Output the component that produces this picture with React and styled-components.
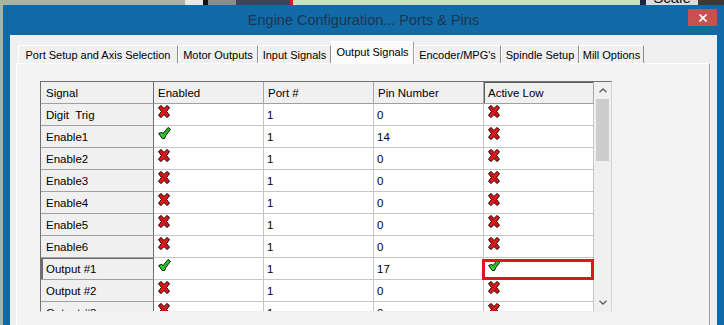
import React from "react";
import styled, { createGlobalStyle } from "styled-components";

const Global = createGlobalStyle`
  html, body { margin: 0; padding: 0; background: #a7b3a3; }
  body { font-family: "Liberation Sans", Arial, sans-serif; }
  * { box-sizing: border-box; }
`;

const Screen = styled.div`
  width: 724px;
  height: 325px;
  overflow: hidden;
  display: flex;
  flex-direction: column;
  background: #a7b3a3;
`;

const DesktopStrip = styled.div`
  display: flex;
  height: 5px;
  flex: none;
  overflow: hidden;
`;

const StripSeg = styled.div`
  width: ${(p) => p.$w}px;
  flex: none;
  background: ${(p) => p.$c};
  overflow: hidden;
  display: flex;
  justify-content: center;
`;

const ScaleText = styled.span`
  font: 15px/15px "Liberation Sans", Arial, sans-serif;
  color: #111;
  margin-top: -10px;
`;

const Body = styled.div`
  display: flex;
  flex: 1;
  min-height: 0;
`;

const DesktopEdge = styled.div`
  width: 3px;
  flex: none;
  background: #a7b3a3;
`;

const Window = styled.div`
  flex: 1;
  min-width: 0;
  display: flex;
  flex-direction: column;
  background: #116aa6;
  padding: 0 7px;
`;

const TitleBar = styled.div`
  height: 30px;
  flex: none;
  display: grid;
  grid-template-columns: 1fr auto 1fr;
  align-items: center;
`;

const Title = styled.div`
  grid-column: 2;
  font-size: 14.5px;
  color: #1d3552;
  white-space: nowrap;
`;

const CloseButton = styled.div`
  grid-column: 3;
  justify-self: end;
  align-self: start;
  margin-top: 4px;
  width: 29px;
  height: 17px;
  background: #c75050;
  display: flex;
  align-items: center;
  justify-content: center;
`;

const Client = styled.div`
  flex: 1;
  min-height: 0;
  background: #f0f0f0;
  padding: 6px 7px 0 6px;
  display: flex;
  flex-direction: column;
`;

const TabRow = styled.div`
  display: flex;
  align-items: flex-end;
  height: 22px;
  flex: none;
  padding-left: 2px;
  position: relative;
  z-index: 1;
`;

const Tab = styled.div`
  width: ${(p) => p.$w}px;
  height: ${(p) => (p.$active ? 23 : 18)}px;
  margin-bottom: ${(p) => (p.$active ? -1 : 0)}px;
  flex: none;
  background: ${(p) => (p.$active ? "#fbfbfb" : "#f0f0f0")};
  border-top: 1px solid #ffffff;
  border-left: 1px solid #ffffff;
  border-right: 1px solid ${(p) => (p.$active ? "#a0a0a0" : "#8c8c8c")};
  font-size: 11px;
  color: #000;
  white-space: nowrap;
  display: flex;
  align-items: center;
  justify-content: center;
  padding-bottom: ${(p) => (p.$active ? 3 : 0)}px;
`;

const Panel = styled.div`
  flex: 1;
  min-height: 0;
  background: #f3f3f3;
  border-top: 1px solid #ffffff;
  border-left: 1px solid #ffffff;
  border-right: 1px solid #a0a0a0;
  padding: 17px 0 0 23px;
`;

const Grid = styled.div`
  width: 572px;
  height: 231px;
  display: flex;
  overflow: hidden;
  background: #f0f0f0;
  border-style: solid;
  border-width: 1px;
  border-color: #707070 #d4d4d4 #f0f0f0 #707070;
`;

const Table = styled.div`
  width: 553px;
  flex: none;
  display: grid;
  grid-template-columns: 113px repeat(4, 110px);
  grid-auto-rows: 22px;
  align-content: start;
  font-size: 11.5px;
  color: #000;
`;

const HeaderCell = styled.div`
  background: #f0f0f0;
  border-right: 1px solid ${(p) => (p.$first ? "#6d6d6d" : "#a8a8a8")};
  border-bottom: 1px solid #a0a0a0;
  padding-left: ${(p) => (p.$first ? 5 : 4)}px;
  display: flex;
  align-items: center;
  white-space: nowrap;
  box-shadow: ${(p) =>
    p.$selected ? "inset 0 1px 0 #5a5a5a, inset 1px 0 0 #5a5a5a" : "none"};
`;

const RowHeader = styled.div`
  background: #f0f0f0;
  border-right: 1px solid #6d6d6d;
  border-bottom: 1px solid #a0a0a0;
  padding-left: 5px;
  display: flex;
  align-items: center;
  white-space: pre;
  box-shadow: ${(p) =>
    p.$selected ? "inset 2px 0 0 #6d6d6d, inset 0 1px 0 #6d6d6d" : "none"};
`;

const Cell = styled.div`
  position: relative;
  background: #ffffff;
  border-right: 1px solid #c6c6c6;
  border-bottom: 1px solid #c6c6c6;
  display: flex;
  align-items: ${(p) => (p.$icon ? "flex-start" : "center")};
  padding: ${(p) => (p.$icon ? "1px 0 0 4px" : "0 0 0 3px")};

  &::after {
    content: "";
    display: ${(p) => (p.$focused ? "block" : "none")};
    position: absolute;
    left: -2px;
    top: 1px;
    right: -1px;
    bottom: -1px;
    border: 3px solid #e0141b;
  }
`;

const ScrollBar = styled.div`
  width: 17px;
  flex: none;
  background: #f0f0f0;
  display: flex;
  flex-direction: column;
  align-items: center;
`;

const ScrollArrow = styled.div`
  height: 17px;
  width: 17px;
  flex: none;
  display: flex;
  align-items: center;
  justify-content: center;
`;

const Thumb = styled.div`
  width: 13px;
  height: 62px;
  flex: none;
  background: #cdcdcd;
`;

const ScrollTrack = styled.div`
  flex: 1;
`;

const Cross = () => (
  <svg width="12" height="13" viewBox="0 0 12 13">
    <polygon
      points="0.5,2.6 3,0.5 6,3.4 9,0.5 11.5,2.6 8.6,6.5 11.5,10.4 9,12.5 6,9.6 3,12.5 0.5,10.4 3.4,6.5"
      fill="#e21a1c"
      stroke="#1a0000"
      strokeWidth="1"
      strokeLinejoin="round"
    />
    <polyline points="2.6,2 9.4,11" stroke="#a50c0c" strokeWidth="0.9" fill="none" />
  </svg>
);

const Check = () => (
  <svg width="13" height="12" viewBox="0 0 13 12">
    <polygon
      points="0.6,6.4 4,5.4 4.9,6.8 10,0.5 12.5,2.2 7.8,8.6 6.6,11.5 4.2,11.5"
      fill="#30d030"
      stroke="#0a1a0a"
      strokeWidth="1"
      strokeLinejoin="round"
    />
    <polyline points="5,9.5 11,1.6" stroke="#1c9a1c" strokeWidth="0.7" fill="none" />
  </svg>
);

const Chevron = ({ down }) => (
  <svg width="8" height="5" viewBox="0 0 8 5">
    <polyline
      points={down ? "0.5,0.8 4,4 7.5,0.8" : "0.5,4.2 4,1 7.5,4.2"}
      fill="none"
      stroke="#606060"
      strokeWidth="1.4"
    />
  </svg>
);

const tabs = [
  { label: "Port Setup and Axis Selection", w: 160 },
  { label: "Motor Outputs", w: 80 },
  { label: "Input Signals", w: 73 },
  { label: "Output Signals", w: 83, active: true },
  { label: "Encoder/MPG's", w: 87 },
  { label: "Spindle Setup", w: 78 },
  { label: "Mill Options", w: 65 },
];

const columns = ["Signal", "Enabled", "Port #", "Pin Number", "Active Low"];

const rows = [
  { name: "Digit  Trig", en: false, port: "1", pin: "0", low: false },
  { name: "Enable1", en: true, port: "1", pin: "14", low: false },
  { name: "Enable2", en: false, port: "1", pin: "0", low: false },
  { name: "Enable3", en: false, port: "1", pin: "0", low: false },
  { name: "Enable4", en: false, port: "1", pin: "0", low: false },
  { name: "Enable5", en: false, port: "1", pin: "0", low: false },
  { name: "Enable6", en: false, port: "1", pin: "0", low: false },
  { name: "Output #1", en: true, port: "1", pin: "17", low: true, selected: true },
  { name: "Output #2", en: false, port: "1", pin: "0", low: false },
  { name: "Output #3", en: false, port: "1", pin: "0", low: false },
];

const strip = [
  { w: 185, c: "#a7b3a3" },
  { w: 18, c: "#e8e8e8" },
  { w: 5, c: "#121212" },
  { w: 28, c: "#8a8c8e" },
  { w: 54, c: "#3b4456" },
  { w: 3, c: "#c42525" },
  { w: 347, c: "#c6e3bd" },
  { w: 6, c: "#1c2444" },
  { w: 52, c: "#dcdcdc", text: "Scale" },
  { w: 26, c: "#3c3a36" },
];

export default function App() {
  return (
    <>
      <Global />
      <Screen>
        <DesktopStrip>
          {strip.map((s, i) => (
            <StripSeg key={i} $w={s.w} $c={s.c}>
              {s.text && <ScaleText>{s.text}</ScaleText>}
            </StripSeg>
          ))}
        </DesktopStrip>
        <Body>
          <DesktopEdge />
          <Window>
            <TitleBar>
              <Title>Engine Configuration... Ports &amp; Pins</Title>
              <CloseButton>
                <svg width="8" height="8" viewBox="0 0 8 8">
                  <path d="M0.5 0.5 L7.5 7.5 M7.5 0.5 L0.5 7.5" stroke="#fff" strokeWidth="1.6" />
                </svg>
              </CloseButton>
            </TitleBar>
            <Client>
              <TabRow>
                {tabs.map((t) => (
                  <Tab key={t.label} $w={t.w} $active={t.active}>
                    {t.label}
                  </Tab>
                ))}
              </TabRow>
              <Panel>
                <Grid>
                  <Table>
                    {columns.map((c, i) => (
                      <HeaderCell key={c} $first={i === 0} $selected={i === 4}>
                        {c}
                      </HeaderCell>
                    ))}
                    {rows.map((r) => (
                      <React.Fragment key={r.name}>
                        <RowHeader $selected={r.selected}>{r.name}</RowHeader>
                        <Cell $icon>{r.en ? <Check /> : <Cross />}</Cell>
                        <Cell>{r.port}</Cell>
                        <Cell>{r.pin}</Cell>
                        <Cell $icon $focused={r.selected}>
                          {r.low ? <Check /> : <Cross />}
                        </Cell>
                      </React.Fragment>
                    ))}
                  </Table>
                  <ScrollBar>
                    <ScrollArrow>
                      <Chevron />
                    </ScrollArrow>
                    <Thumb />
                    <ScrollTrack />
                    <ScrollArrow>
                      <Chevron down />
                    </ScrollArrow>
                  </ScrollBar>
                </Grid>
              </Panel>
            </Client>
          </Window>
        </Body>
      </Screen>
    </>
  );
}
